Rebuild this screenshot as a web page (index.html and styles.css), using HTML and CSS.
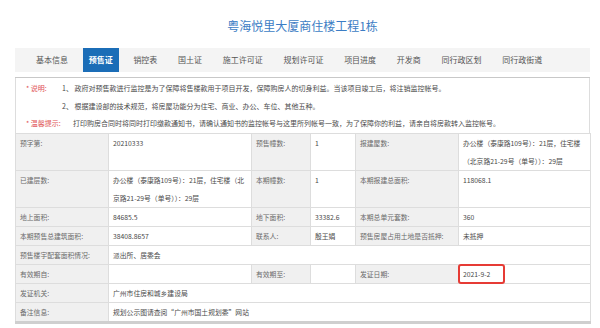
FILE: index.html
```html
<!DOCTYPE html>
<html lang="zh-CN">
<head>
    <meta charset="UTF-8">
    <meta name="viewport" content="width=600">
    <title>粤海悦里大厦商住楼工程1栋</title>
    <link rel="stylesheet" href="styles.css">
</head>
<body>
    <div class="page">
        <h1 class="title">粤海悦里大厦商住楼工程1栋</h1>
        <ul class="tabs">
            <li>基本信息</li>
            <li class="active">预售证</li>
            <li>销控表</li>
            <li>国土证</li>
            <li>施工许可证</li>
            <li>规划许可证</li>
            <li>项目进度</li>
            <li>开发商</li>
            <li>同行政区划</li>
            <li>同行政街道</li>
        </ul>
        <div class="panel">
            <div class="notes">
                <div class="note-row">
                    <span class="note-label">* 说明:</span>
                    <span>1、 政府对预售款进行监控是为了保障将售楼款用于项目开发，保障购房人的切身利益。当该项目竣工后，将注销监控帐号。</span>
                </div>
                <div class="note-row">
                    <span class="note-label"></span>
                    <span>2、 根据建设部的技术规范，将房屋功能分为住宅、商业、办公、车位、其他五种。</span>
                </div>
                <div class="note-row">
                    <span class="note-label">* 温馨提示:</span>
                    <span class="note-tip">打印购房合同时将同时打印缴款通知书，请确认通知书的监控帐号与这里所列帐号一致，为了保障你的利益，请亲自将房款转入监控帐号。</span>
                </div>
            </div>
            <table class="info">
                <colgroup>
                    <col class="c1">
                    <col class="c2">
                    <col class="c3">
                    <col class="c4">
                    <col class="c5">
                    <col class="c6">
                </colgroup>
                <tr>
                    <th>预字第:</th>
                    <td>20210333</td>
                    <th>预售幢数:</th>
                    <td>1</td>
                    <th>报建屋数:</th>
                    <td>办公楼（泰康路109号）：21层，住宅楼（北京路21-29号（单号））：29层</td>
                </tr>
                <tr>
                    <th>已建层数:</th>
                    <td>办公楼（泰康路109号）：21层，住宅楼（北京路21-29号（单号））：29层</td>
                    <th>本期幢数:</th>
                    <td>1</td>
                    <th>本期报建总面积:</th>
                    <td>118068.1</td>
                </tr>
                <tr>
                    <th>地上面积:</th>
                    <td>84685.5</td>
                    <th>地下面积:</th>
                    <td>33382.6</td>
                    <th>本期总单元套数:</th>
                    <td>360</td>
                </tr>
                <tr>
                    <th>本期预售总建筑面积:</th>
                    <td>38408.8657</td>
                    <th>联系人:</th>
                    <td>殷王娟</td>
                    <th>预售房屋占用土地是否抵押:</th>
                    <td>未抵押</td>
                </tr>
                <tr>
                    <th>预售楼宇配套面积情况:</th>
                    <td colspan="5">派出所、居委会</td>
                </tr>
                <tr>
                    <th>有效期自:</th>
                    <td></td>
                    <th>有效期至:</th>
                    <td></td>
                    <th>发证日期:</th>
                    <td class="marked">2021-9-2<span class="mark"></span></td>
                </tr>
                <tr>
                    <th>发证机关:</th>
                    <td colspan="5">广州市住房和城乡建设局</td>
                </tr>
                <tr>
                    <th>备注信息:</th>
                    <td colspan="5">规划公示图请查阅“广州市国土规划委”网站</td>
                </tr>
            </table>
        </div>
    </div>
</body>
</html>
```

FILE: styles.css
```css
body {
    margin: 0;
    padding: 0;
    background: #fff;
    font-family: "Noto Sans CJK SC", "Liberation Sans", sans-serif;
    color: #555;
}
.page {
    width: 575px;
    margin-left: 15px;
}
.title {
    margin: 0;
    padding-top: 16px;
    height: 20px;
    line-height: 20px;
    text-align: center;
    font-size: 12px;
    font-weight: normal;
    color: #3c7dc4;
    margin-bottom: 12px;
}
.tabs {
    list-style: none;
    margin: 0;
    padding: 0 0 0 15px;
    height: 24px;
    display: flex;
    gap: 8.7px;
    background: #f4f4f4;
}
.tabs li {
    padding: 0 6px;
    line-height: 24px;
    font-size: 8px;
    color: #555;
}
.tabs li.active {
    background: #1b6db7;
    color: #fff;
    font-weight: bold;
}
.panel {
    margin-top: 5px;
    border-top: 1px solid #c8c8c8;
}
.notes {
    border-left: 1px solid #ddd;
    border-right: 1px solid #ddd;
    padding: 2px 0 0 10px;
    font-size: 7px;
    line-height: 17.5px;
    color: #4a4a4a;
}
.note-row {
    display: flex;
    white-space: nowrap;
}
.note-label {
    width: 36px;
    flex: none;
    color: #e05252;
}
.note-tip {
    padding-left: 11px;
}
.info {
    width: 575px;
    table-layout: fixed;
    border-collapse: collapse;
    font-size: 6.8px;
    line-height: 18px;
    border-bottom: 3px solid #cfcfcf;
}
.info .c1 { width: 93px; }
.info .c2 { width: 143px; }
.info .c3 { width: 59px; }
.info .c4 { width: 45px; }
.info .c5 { width: 103px; }
.info .c6 { width: 132px; }
.info th,
.info td {
    border: 1px solid #ddd;
    padding: 0 2px 0 4px;
    vertical-align: top;
    text-align: left;
}
.info th {
    background: #f0f0f0;
    font-weight: normal;
    color: #6a6a6a;
}
.info td {
    background: #fff;
    color: #4a4a4a;
}
.info td.marked {
    position: relative;
}
.mark {
    position: absolute;
    left: -1px;
    top: -1px;
    width: 47px;
    height: 20px;
    box-sizing: border-box;
    border: 2px solid #e63b35;
    border-radius: 3px;
}
```
